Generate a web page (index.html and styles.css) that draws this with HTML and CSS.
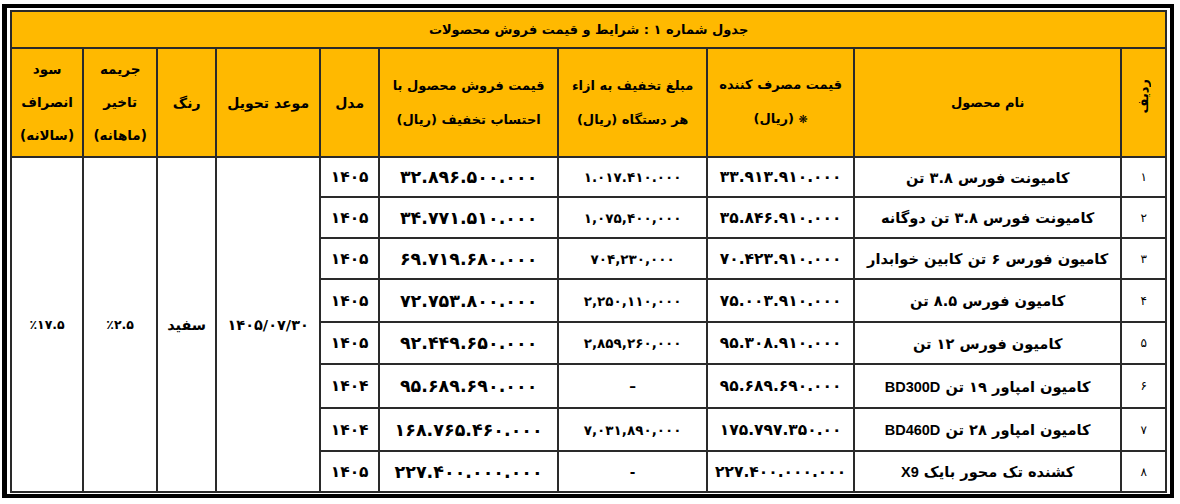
FILE: index.html
```html
<!DOCTYPE html>
<html lang="fa">
<head>
<meta charset="utf-8">
<title>جدول شماره ۱ : شرایط و قیمت فروش محصولات</title>
<link rel="stylesheet" href="styles.css">
</head>
<body>
<div class="frame">
<table class="price-table" dir="rtl">
  <colgroup>
    <col class="c-idx"><col class="c-name"><col class="c-consumer"><col class="c-discount"><col class="c-sale"><col class="c-model"><col class="c-date"><col class="c-color"><col class="c-penalty"><col class="c-profit">
  </colgroup>
  <thead>
    <tr class="title-row"><th colspan="10">جدول شماره ۱ : شرایط و قیمت فروش محصولات</th></tr>
    <tr class="head-row">
      <th><span class="vertical">ردیف</span></th>
      <th>نام محصول</th>
      <th class="two">قیمت مصرف کننده<br><span class="star">❋</span> (ریال)</th>
      <th class="two">مبلغ تخفیف به ازاء<br>هر دستگاه (ریال)</th>
      <th class="two">قیمت فروش محصول با<br>احتساب تخفیف (ریال)</th>
      <th class="big">مدل</th>
      <th class="big">موعد تحویل</th>
      <th class="big">رنگ</th>
      <th class="three">جریمه<br>تاخیر<br>(ماهانه)</th>
      <th class="three">سود<br>انصراف<br>(سالانه)</th>
    </tr>
  </thead>
  <tbody>
    <tr class="h40">
      <td class="idx">۱</td><td class="name">کامیونت فورس ۳.۸ تن</td><td class="consumer">۳۳.۹۱۳.۹۱۰.۰۰۰</td><td class="discount">۱.۰۱۷.۴۱۰.۰۰۰</td><td class="sale">۳۲.۸۹۶.۵۰۰.۰۰۰</td><td class="model">۱۴۰۵</td>
      <td class="merged" rowspan="8">۱۴۰۵/۰۷/۳۰</td><td class="merged color" rowspan="8">سفید</td><td class="merged pct" rowspan="8">٪۲.۵</td><td class="merged pct" rowspan="8">٪۱۷.۵</td>
    </tr>
    <tr class="h41"><td class="idx">۲</td><td class="name">کامیونت فورس ۳.۸ تن دوگانه</td><td class="consumer">۳۵.۸۴۶.۹۱۰.۰۰۰</td><td class="discount">۱,۰۷۵,۴۰۰,۰۰۰</td><td class="sale">۳۴.۷۷۱.۵۱۰.۰۰۰</td><td class="model">۱۴۰۵</td></tr>
    <tr class="h41"><td class="idx">۳</td><td class="name">کامیون فورس ۶ تن کابین خوابدار</td><td class="consumer">۷۰.۴۲۳.۹۱۰.۰۰۰</td><td class="discount">۷۰۴,۲۳۰,۰۰۰</td><td class="sale">۶۹.۷۱۹.۶۸۰.۰۰۰</td><td class="model">۱۴۰۵</td></tr>
    <tr class="h43"><td class="idx">۴</td><td class="name">کامیون فورس ۸.۵ تن</td><td class="consumer">۷۵.۰۰۳.۹۱۰.۰۰۰</td><td class="discount">۲,۲۵۰,۱۱۰,۰۰۰</td><td class="sale">۷۲.۷۵۳.۸۰۰.۰۰۰</td><td class="model">۱۴۰۵</td></tr>
    <tr class="h42"><td class="idx">۵</td><td class="name">کامیون فورس ۱۲ تن</td><td class="consumer">۹۵.۳۰۸.۹۱۰.۰۰۰</td><td class="discount">۲,۸۵۹,۲۶۰,۰۰۰</td><td class="sale">۹۲.۴۴۹.۶۵۰.۰۰۰</td><td class="model">۱۴۰۵</td></tr>
    <tr class="h44"><td class="idx">۶</td><td class="name">کامیون امپاور ۱۹ تن <span class="latin">BD300D</span></td><td class="consumer">۹۵.۶۸۹.۶۹۰.۰۰۰</td><td class="discount">–</td><td class="sale">۹۵.۶۸۹.۶۹۰.۰۰۰</td><td class="model">۱۴۰۴</td></tr>
    <tr class="h43"><td class="idx">۷</td><td class="name">کامیون امپاور ۲۸ تن <span class="latin">BD460D</span></td><td class="consumer">۱۷۵.۷۹۷.۳۵۰.۰۰</td><td class="discount">۷,۰۳۱,۸۹۰,۰۰۰</td><td class="sale">۱۶۸.۷۶۵.۴۶۰.۰۰۰</td><td class="model">۱۴۰۴</td></tr>
    <tr class="h41"><td class="idx">۸</td><td class="name">کشنده تک محور بایک <span class="latin">X9</span></td><td class="consumer">۲۲۷.۴۰۰.۰۰۰.۰۰۰</td><td class="discount">-</td><td class="sale">۲۲۷.۴۰۰.۰۰۰.۰۰۰</td><td class="model">۱۴۰۵</td></tr>
  </tbody>
</table>
</div>
</body>
</html>
```

FILE: styles.css
```css
* { box-sizing: border-box; }
html, body { margin: 0; padding: 0; background: #fff; }
body {
  font-family: "DejaVu Sans", sans-serif;
  color: #000;
}
.frame {
  width: max-content;
  margin: 4px 0 0 2px;
  border: 4px solid #000;
  border-left-width: 5px;
  padding: 2px 3px 1px 3px;
}
.price-table {
  border-collapse: collapse;
  table-layout: fixed;
  width: 1155px;
  border: 2px solid #2a2a2a;
}
.c-idx { width: 45px; }
.c-name { width: 267px; }
.c-consumer { width: 147px; }
.c-discount { width: 149px; }
.c-sale { width: 179px; }
.c-model { width: 59px; }
.c-date { width: 104px; }
.c-color { width: 59px; }
.c-penalty { width: 74px; }
.c-profit { width: 72px; }

.price-table th, .price-table td {
  border: 2px solid #2a2a2a;
  padding: 0;
  text-align: center;
  vertical-align: middle;
  white-space: nowrap;
}
.price-table th {
  background: #ffb900;
  font-weight: bold;
  font-size: 13px;
}
.title-row th { height: 37px; font-size: 13px; }
.head-row th { height: 109px; line-height: 34px; }
.head-row th.big { font-size: 14px; }
.head-row th.three { line-height: 33px; font-size: 13.5px; }
.star { font-size: 11px; }
.vertical {
  display: inline-block;
  writing-mode: vertical-rl;
  transform: rotate(180deg);
  font-size: 13px;
}
.h40 td { height: 40px; }
.h41 td { height: 41px; }
.h42 td { height: 42px; }
.h43 td { height: 43px; }
.h44 td { height: 44px; }

.idx { font-size: 12px; }
.name { font-size: 14.6px; font-weight: bold; }
.latin { font-family: "Liberation Sans", sans-serif; font-size: 14.5px; font-weight: bold; }
.consumer { font-size: 15.5px; font-weight: bold; }
.discount { font-size: 13.5px; font-weight: bold; }
.sale { font-size: 17.5px; font-weight: bold; }
.model { font-size: 15.5px; font-weight: bold; }
.merged { font-size: 14.5px; font-weight: bold; }
.merged.pct { font-size: 12.5px; }
```
